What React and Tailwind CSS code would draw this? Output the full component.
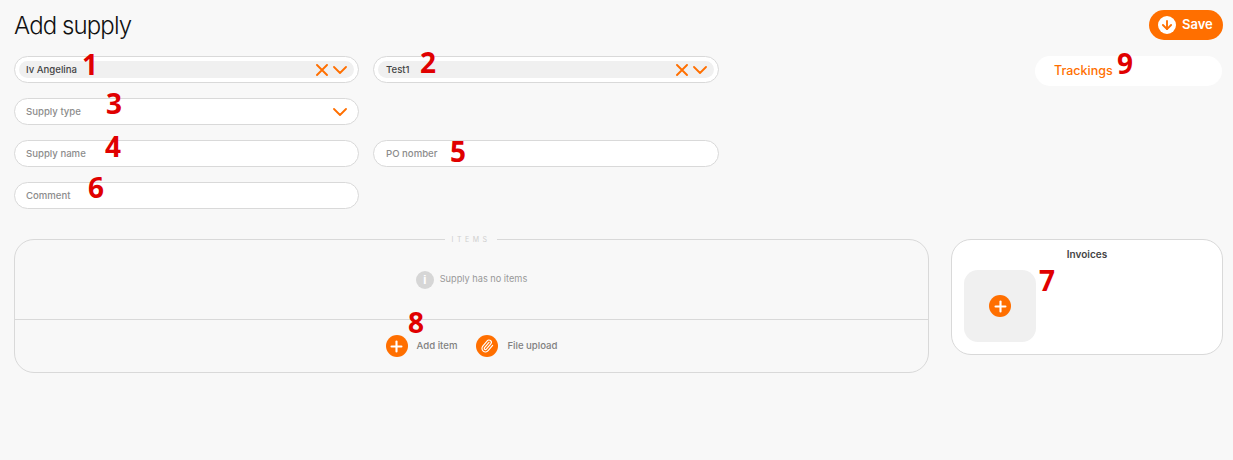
import { Paperclip, Plus, ArrowDown } from "lucide-react";

const Mark = ({ className, children }) => (
  <span className={`absolute font-['Open_Sans',sans-serif] font-bold text-[28px] leading-[28px] text-[#e00000] ${className}`}>
    {children}
  </span>
);

const RoundPlus = () => (
  <span className="w-[22px] h-[22px] rounded-full bg-[#ff6f00] flex items-center justify-center shrink-0">
    <Plus size={17} strokeWidth={3} className="text-white" />
  </span>
);

const Chevron = () => (
  <svg width="14" height="8" viewBox="0 0 14 8" fill="none" stroke="#ff6f00" strokeWidth="1.8" strokeLinecap="round" strokeLinejoin="round">
    <path d="M1 1l6 6 6-6" />
  </svg>
);

const Cross = () => (
  <svg width="12" height="12" viewBox="0 0 12 12" fill="none" stroke="#ff6f00" strokeWidth="1.9" strokeLinecap="round" className="mr-[5px]">
    <path d="M1 1l10 10M11 1L1 11" />
  </svg>
);

// select with a chosen value, grey chip inside
const ChipSelect = ({ value, mark, markClass, width = "w-[345px]", inset = "pl-[7px]" }) => (
  <div className={`relative ${width} h-[27px] rounded-full border border-[#d9d9d9] bg-white p-[4px]`}>
    <div className={`h-full rounded-full bg-[#f0f0f0] flex items-center ${inset} pr-[7px] text-[9.6px] font-medium text-[#444]`}>
      <span className="flex-1 pt-[1px]">{value}</span>
      <Cross />
      <Chevron />
    </div>
    <Mark className={markClass}>{mark}</Mark>
  </div>
);

const Field = ({ label, mark, markClass, arrow, width = "w-[345px]", inset = "pl-[11px]" }) => (
  <div className={`relative ${width} h-[27px] rounded-full border border-[#d9d9d9] bg-white flex items-center ${inset} pr-[11px] text-[9.6px] font-medium text-[#8c8c8c]`}>
    <span className="flex-1 pt-[1px]">{label}</span>
    {arrow && <Chevron />}
    <Mark className={markClass}>{mark}</Mark>
  </div>
);

export default function App() {
  return (
    <div className="min-h-[460px] bg-[#f8f8f8] font-['Inter',sans-serif] pl-[14px] pr-[10px]">
      <div className="flex items-center justify-between pt-[10px] h-[56px] pb-[16px]">
        <h1 className="text-[24px] font-light text-[#111] tracking-[-0.9px] translate-y-[1px]">Add supply</h1>
        <button className="w-[74px] h-[30px] rounded-full bg-[#ff6f00] flex items-center pl-[9px] gap-[6px] text-[13px] font-semibold text-white">
          <span className="w-[18px] h-[18px] rounded-full bg-white flex items-center justify-center">
            <ArrowDown size={14} strokeWidth={3.2} className="text-[#ff6f00]" />
          </span>
          Save
        </button>
      </div>

      <div className="flex justify-between">
        <div className="flex flex-col gap-[15px]">
          <div className="flex gap-[14px]">
            <ChipSelect value="Iv Angelina" mark="1" markClass="left-[67px] top-[-7px]" />
            <ChipSelect value="Test1" width="w-[346px]" inset="pl-[8px]" mark="2" markClass="left-[46px] top-[-9px]" />
          </div>
          <Field label="Supply type" arrow mark="3" markClass="left-[91px] top-[-10px]" />
          <div className="flex gap-[14px]">
            <Field label="Supply name" mark="4" markClass="left-[90px] top-[-9px]" />
            <Field label="PO nomber" width="w-[346px]" inset="pl-[12px]" mark="5" markClass="left-[76px] top-[-4px]" />
          </div>
          <Field label="Comment" mark="6" markClass="left-[73px] top-[-10px]" />
        </div>
        <div className="relative w-[187px] h-[30px] rounded-full bg-white flex items-center pl-[19px] text-[12.5px] font-medium text-[#ff6f00] mr-[1px]">
          Trackings
          <Mark className="left-[82px] top-[-7px]">9</Mark>
        </div>
      </div>

      <div className="flex gap-[22px] mt-[30px]">
        <div className="relative w-[915px] h-[134px] rounded-[20px] border border-[#d9d9d9] flex flex-col">
          <span className="absolute left-[430px] top-[-5px] w-[52px] bg-[#f8f8f8] text-center text-[7px] leading-[10px] tracking-[3.5px] text-[#cfcfcf]">
            ITEMS
          </span>
          <div className="h-[80px] border-b border-[#d9d9d9] flex items-center justify-center gap-[6px] text-[9.2px] text-[#999]">
            <span className="w-[18px] h-[18px] rounded-full bg-[#d6d6d6] flex items-center justify-center text-white font-['Liberation_Sans',sans-serif] font-bold text-[13px] leading-none">
              i
            </span>
            <span className="mb-[2px]">Supply has no items</span>
          </div>
          <div className="relative flex-1 flex items-center justify-center text-[9.6px] font-medium text-[#808080]">
            <RoundPlus />
            <span className="ml-[9px] mr-[19px]">Add item</span>
            <span className="w-[22px] h-[22px] rounded-full bg-[#ff6f00] flex items-center justify-center">
              <Paperclip size={14} strokeWidth={2} className="text-white rotate-[-5deg]" />
            </span>
            <span className="ml-[9px]">File upload</span>
            <Mark className="left-[393px] top-[-12px]">8</Mark>
          </div>
        </div>

        <div className="relative w-[272px] h-[116px] rounded-[20px] border border-[#d9d9d9] bg-white px-[12px] pt-[7px]">
          <div className="text-center text-[10px] leading-[14px] font-semibold text-[#444]">Invoices</div>
          <div className="mt-[9px] w-[72px] h-[72px] rounded-[14px] bg-[#f0f0f0] flex items-center justify-center">
            <RoundPlus />
          </div>
          <Mark className="left-[87px] top-[26px]">7</Mark>
        </div>
      </div>
    </div>
  );
}
